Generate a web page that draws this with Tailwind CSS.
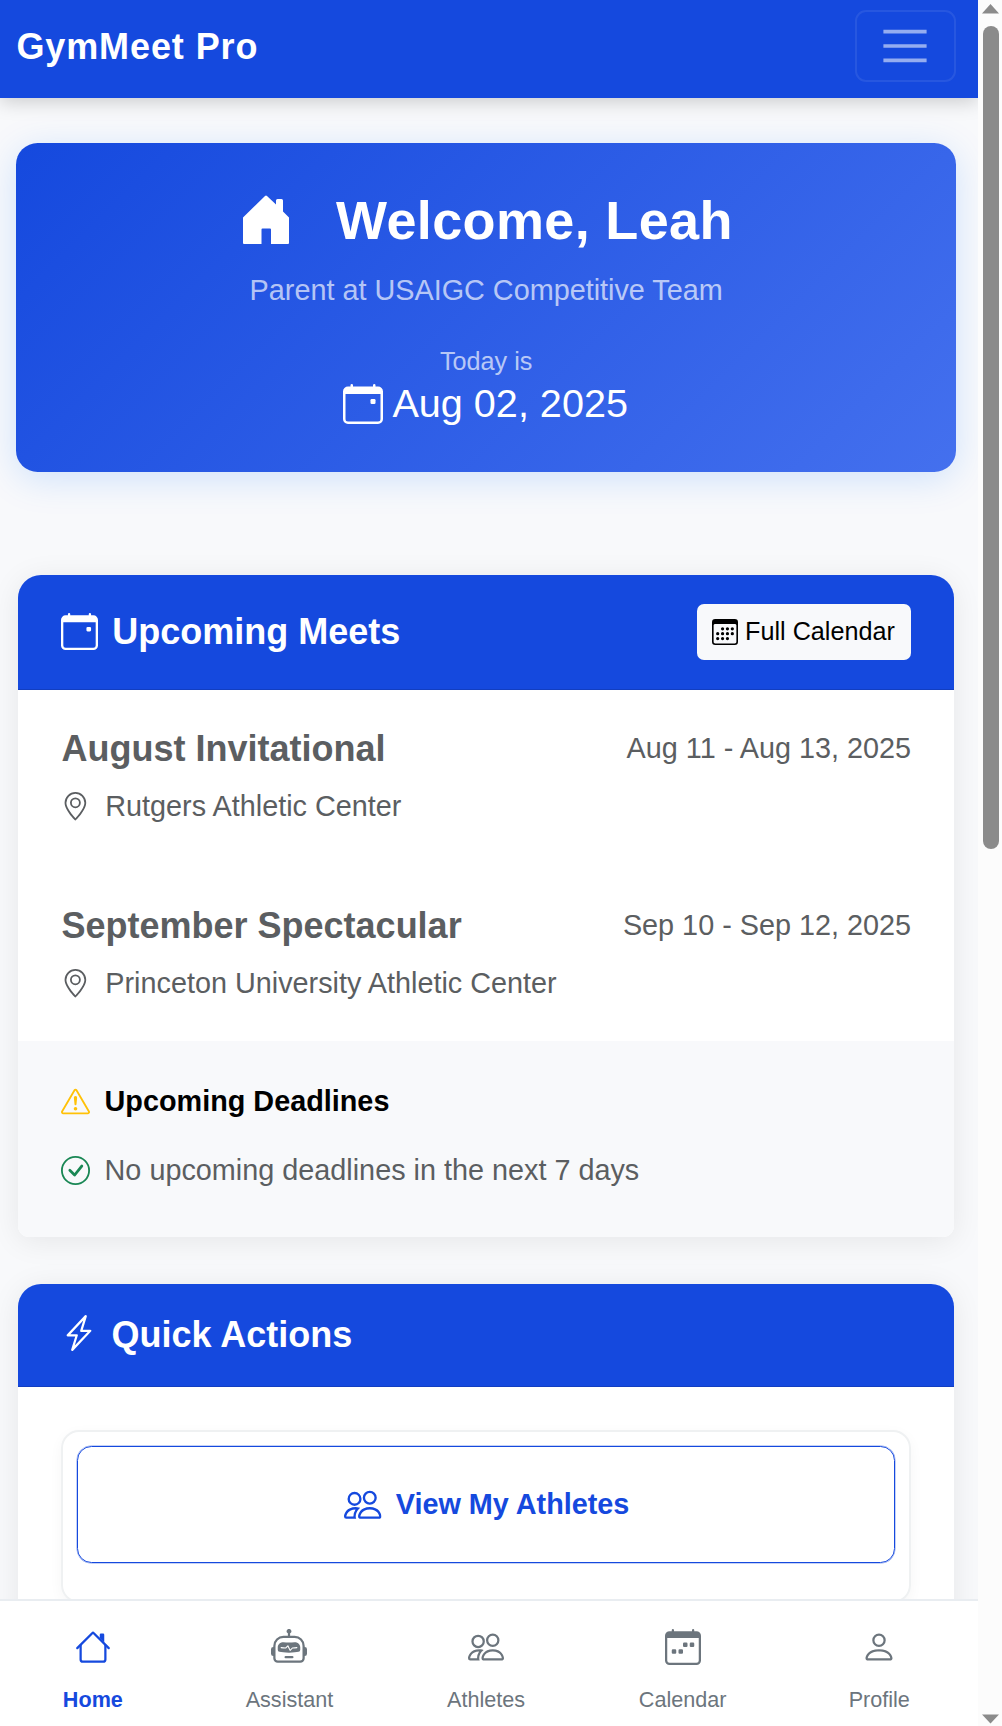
<!DOCTYPE html>
<html lang="en">
<head>
<meta charset="utf-8">
<title>GymMeet Pro</title>
<script src="https://cdn.jsdelivr.net/npm/@tailwindcss/browser@4"></script>
</head>
<body class="relative flex h-[1726px] w-[1002px] overflow-hidden bg-[#f8f9fb] font-['Liberation_Sans',Arial,sans-serif] text-[28.8px] leading-[43.2px] text-[#5b5e61]">
<svg class="hidden">
  <symbol id="calendar-event" viewBox="0 0 16 16"><path d="M11 6.5a.5.5 0 0 1 .5-.5h1a.5.5 0 0 1 .5.5v1a.5.5 0 0 1-.5.5h-1a.5.5 0 0 1-.5-.5z"/><path d="M3.500 0a.5.5 0 0 1 .5.5V1h8V.5a.5.5 0 0 1 1 0V1h1a2 2 0 0 1 2 2v11a2 2 0 0 1-2 2H2a2 2 0 0 1-2-2V3a2 2 0 0 1 2-2h1V.5a.5.5 0 0 1 .5-.5M1 4v10a1 1 0 0 0 1 1h12a1 1 0 0 0 1-1V4z"/></symbol>
  <symbol id="geo" viewBox="0 0 16 16"><path d="M12.166 8.94c-.524 1.062-1.234 2.12-1.96 3.07A32 32 0 0 1 8 14.58a32 32 0 0 1-2.206-2.57c-.726-.95-1.436-2.008-1.96-3.07C3.304 7.867 3 6.862 3 6a5 5 0 0 1 10 0c0 .862-.305 1.867-.834 2.94M8 16s6-5.686 6-10A6 6 0 0 0 2 6c0 4.314 6 10 6 10"/><path d="M8 8a2 2 0 1 1 0-4 2 2 0 0 1 0 4m0 1a3 3 0 1 0 0-6 3 3 0 0 0 0 6"/></symbol>
  <symbol id="people" viewBox="0 0 16 16"><path d="M15 14s1 0 1-1-1-4-5-4-5 3-5 4 1 1 1 1zm-7.978-1L7 12.996c.001-.264.167-1.03.76-1.72C8.312 10.629 9.282 10 11 10c1.717 0 2.687.63 3.24 1.276.593.69.758 1.457.76 1.72l-.008.002-.014.002zM11 7a2 2 0 1 0 0-4 2 2 0 0 0 0 4m3-2a3 3 0 1 1-6 0 3 3 0 0 1 6 0M6.936 9.28a6 6 0 0 0-1.23-.247A7 7 0 0 0 5 9c-4 0-5 3-5 4q0 1 1 1h4.216A2.240 2.240 0 0 1 5 13c0-1.010.377-2.042 1.090-2.904.243-.294.526-.569.846-.816M4.920 10A5.500 5.500 0 0 0 4 13H1c0-.26.164-1.030.76-1.724.545-.636 1.492-1.256 3.160-1.275ZM1.500 5.500a3 3 0 1 1 6 0 3 3 0 0 1-6 0m3-2a2 2 0 1 0 0 4 2 2 0 0 0 0-4"/></symbol>
</svg>

<div class="flex w-[977.6px] shrink-0 flex-col">
  <header class="z-10 flex h-[98.4px] shrink-0 items-start justify-between bg-[#1549de] pt-[10px] pr-[22px] pl-[16.4px] shadow-[0_4px_18px_rgba(0,0,0,0.18)]">
    <span class="text-[36px] leading-[73px] font-bold tracking-[0.9px] text-white">GymMeet Pro</span>
    <button class="flex h-[72px] w-[100.500px] items-center justify-center rounded-[11px] border-2 border-white/8">
      <svg class="size-[54px]" viewBox="0 0 30 30" fill="none" stroke="white" stroke-opacity=".55" stroke-width="2" stroke-miterlimit="10"><path d="M3 7h24M3 15h24M3 23h24"/></svg>
    </button>
  </header>

  <main class="flex flex-col">
    <section class="mt-[45px] ml-[16.4px] flex h-[329px] w-[939.600px] flex-col items-center rounded-[21.600px] bg-[linear-gradient(135deg,#1549de_0%,#4470ee_100%)] pt-[43.500px] text-white shadow-[0_7px_36px_rgba(13,110,253,0.17)]">
      <h1 class="flex h-[66px] items-center gap-[47.500px] pl-[3px] text-[54px] leading-[66px] font-bold tracking-[0.35px]">
        <svg class="h-[49px] w-[46px]" viewBox="0 0 46 49" fill="currentColor"><path d="M0 22.500 22 1Q23 0 24 1L33 9.500V5.500Q33 4 34.500 4H38.500Q40 4 40 5.500V16.500L46 22.500V48Q46 49 45 49H28V34.500Q28 33.500 27 33.500H19.500Q18.500 33.500 18.500 34.500V49H1Q0 49 0 48Z"/></svg>
        Welcome, Leah
      </h1>
      <p class="mt-[16px] text-white/68">Parent at USAIGC Competitive Team</p>
      <small class="mt-[30.500px] text-[25.200px] leading-[37.800px] text-white/68">Today is</small>
      <div class="flex items-center gap-[9px] pr-px text-[39.600px] leading-[46.600px]">
        <svg class="size-[40px]" fill="currentColor"><use href="#calendar-event"/></svg>Aug 02, 2025
      </div>
    </section>

    <section class="mt-[102.600px] ml-[18.200px] w-[936.200px] rounded-t-[23px] rounded-b-[11px] bg-white shadow-[0_4px_30px_rgba(0,0,0,0.08)]">
      <div class="flex h-[115.500px] items-center justify-between rounded-t-[23px] border-b border-[#123ec0] bg-[#1549de] px-[43px] pb-px">
        <h2 class="flex items-center gap-[14px] pb-px text-[36px] font-bold text-white"><svg class="size-[37px]" fill="currentColor"><use href="#calendar-event"/></svg>Upcoming Meets</h2>
        <a class="flex h-[56px] items-center gap-[7px] rounded-[7px] bg-[#f8f9fb] pr-[16.500px] pl-[15px] text-[25.200px] text-black">
          <svg class="size-[26px]" viewBox="0 0 16 16" fill="currentColor"><path d="M14 0H2a2 2 0 0 0-2 2v12a2 2 0 0 0 2 2h12a2 2 0 0 0 2-2V2a2 2 0 0 0-2-2M1 3.857C1 3.384 1.448 3 2 3h12c.552 0 1 .384 1 .857v10.286c0 .473-.448.857-1 .857H2c-.552 0-1-.384-1-.857z"/><path d="M6.500 7a1 1 0 1 0 0-2 1 1 0 0 0 0 2m3 0a1 1 0 1 0 0-2 1 1 0 0 0 0 2m3 0a1 1 0 1 0 0-2 1 1 0 0 0 0 2m-9 3a1 1 0 1 0 0-2 1 1 0 0 0 0 2m3 0a1 1 0 1 0 0-2 1 1 0 0 0 0 2m3 0a1 1 0 1 0 0-2 1 1 0 0 0 0 2m3 0a1 1 0 1 0 0-2 1 1 0 0 0 0 2m-9 3a1 1 0 1 0 0-2 1 1 0 0 0 0 2m3 0a1 1 0 1 0 0-2 1 1 0 0 0 0 2m3 0a1 1 0 1 0 0-2 1 1 0 0 0 0 2"/></svg>
          Full Calendar</a>
      </div>
      <div class="flex h-[350.500px] flex-col gap-[75.400px] px-[43.300px] pt-[37px]">
        <div>
          <div class="flex items-center justify-between"><h3 class="text-[36px] font-bold">August Invitational</h3><span>Aug 11 - Aug 13, 2025</span></div>
          <div class="mt-[14.600px] flex items-center gap-[15.500px]"><svg class="-ml-[0.5px] size-[28.800px]" fill="currentColor"><use href="#geo"/></svg>Rutgers Athletic Center</div>
        </div>
        <div>
          <div class="flex items-center justify-between"><h3 class="text-[36px] font-bold">September Spectacular</h3><span>Sep 10 - Sep 12, 2025</span></div>
          <div class="mt-[14.600px] flex items-center gap-[15.500px]"><svg class="-ml-[0.5px] size-[28.800px]" fill="currentColor"><use href="#geo"/></svg>Princeton University Athletic Center</div>
        </div>
      </div>
      <div class="h-[196.500px] rounded-b-[11px] bg-[#f8f9fb] px-[43px] pt-[39px]">
        <div class="flex items-center gap-[14.400px] font-bold text-black">
          <svg class="size-[29px] text-[#ffc107]" viewBox="0 0 16 16" fill="currentColor"><path d="M7.938 2.016A.13.13 0 0 1 8.002 2a.13.13 0 0 1 .063.016.15.15 0 0 1 .054.057l6.857 11.667c.036.06.035.124.002.183a.2.2 0 0 1-.054.06.1.1 0 0 1-.066.017H1.146a.1.1 0 0 1-.066-.017.2.2 0 0 1-.054-.06.18.18 0 0 1 .002-.183L7.884 2.073a.15.15 0 0 1 .054-.057m1.044-.45a1.130 1.130 0 0 0-1.960 0L.165 13.233c-.457.778.091 1.767.98 1.767h13.713c.889 0 1.438-.99.98-1.767z"/><path d="M7.002 12a1 1 0 1 1 2 0 1 1 0 0 1-2 0M7.100 5.995a.905.905 0 1 1 1.800 0l-.35 3.507a.552.552 0 0 1-1.100 0z"/></svg>
          Upcoming Deadlines</div>
        <div class="mt-[25.800px] flex items-center gap-[14.400px]">
          <svg class="size-[29px] text-[#198754]" viewBox="0 0 16 16" fill="currentColor"><path d="M8 15A7 7 0 1 1 8 1a7 7 0 0 1 0 14m0 1A8 8 0 1 0 8 0a8 8 0 0 0 0 16"/><path d="m10.970 4.970-.02.022-3.473 4.425-2.093-2.094a.75.75 0 0 0-1.060 1.060L6.970 11.030a.75.75 0 0 0 1.079-.02l3.992-4.990a.75.75 0 0 0-1.071-1.050"/></svg>
          No upcoming deadlines in the next 7 days</div>
      </div>
    </section>

    <section class="mt-[46.500px] ml-[18.200px] h-[500px] w-[936.200px] shrink-0 rounded-[23px] bg-white shadow-[0_4px_30px_rgba(0,0,0,0.08)]">
      <div class="flex h-[102.600px] items-center rounded-t-[23px] border-b border-[#123ec0] bg-[#1549de] px-[43px]">
        <h2 class="flex items-center gap-[14.400px] text-[36px] font-bold text-white">
          <svg class="mb-[3px] size-[36px]" viewBox="0 0 16 16" fill="currentColor"><path d="M11.251.068a.5.5 0 0 1 .227.58L9.677 6.500H13a.5.5 0 0 1 .364.843l-8 8.500a.5.5 0 0 1-.842-.49L6.323 9.500H3a.5.5 0 0 1-.364-.843l8-8.500a.5.5 0 0 1 .615-.09zM4.157 8.500H7a.5.5 0 0 1 .478.647L6.110 13.590l5.732-6.090H9a.5.5 0 0 1-.478-.647L9.890 2.410z"/></svg>
          Quick Actions</h2>
      </div>
      <div class="px-[43.300px] pt-[43.500px]">
        <div class="h-[173px] rounded-[18px] border-2 border-[#eff1f2] p-[14px] shadow-[0_4px_14px_rgba(0,0,0,0.04)]">
          <a class="flex h-[117px] items-center justify-center gap-[14px] rounded-[14.400px] border-[1.800px] border-[#1549de] pl-px font-bold text-[#1549de] ring-[0.5px] ring-[#1549de]/50"><svg class="size-[37.500px]" fill="currentColor"><use href="#people"/></svg>View My Athletes</a>
        </div>
      </div>
    </section>
  </main>
</div>

<!-- Fixed mobile tab bar -->
<nav class="fixed bottom-0 left-0 z-20 flex h-[127px] w-[977.600px] justify-center border-t-2 border-[#e9edf1] bg-white pt-[27.500px] pr-[5.500px] text-[21.600px] leading-[32.400px] text-[#6c757d]">
  <a class="flex w-[196.600px] shrink-0 flex-col items-center gap-[19px] font-bold text-[#1549de]"><svg class="size-[36px]" viewBox="0 0 16 16" fill="currentColor"><path d="M2 13.500V7h1v6.500a.5.5 0 0 0 .5.5h9a.5.5 0 0 0 .5-.5V7h1v6.500a1.500 1.500 0 0 1-1.500 1.500h-9A1.500 1.500 0 0 1 2 13.500m11-11V6l-2-2V2.500a.5.5 0 0 1 .5-.5h1a.5.5 0 0 1 .5.5"/><path d="M7.293 1.500a1 1 0 0 1 1.414 0l6.647 6.646a.5.5 0 0 1-.708.708L8 2.207 1.354 8.854a.5.5 0 1 1-.708-.708z"/></svg>Home</a>
  <a class="flex w-[196.600px] shrink-0 flex-col items-center gap-[19px]"><svg class="size-[36px]" viewBox="0 0 16 16" fill="currentColor"><path d="M6 12.500a.5.5 0 0 1 .5-.5h3a.5.5 0 0 1 0 1h-3a.5.5 0 0 1-.5-.5M3 8.062C3 6.760 4.235 5.765 5.530 5.886a26.600 26.600 0 0 0 4.940 0C11.765 5.765 13 6.760 13 8.062v1.157a.93.93 0 0 1-.765.935c-.845.147-2.340.346-4.235.346s-3.390-.2-4.235-.346A.93.93 0 0 1 3 9.219zm4.542-.827a.25.25 0 0 0-.217.068l-.92.9a25 25 0 0 1-1.871-.183.25.25 0 0 0-.068.495c.55.076 1.232.149 2.020.193a.25.25 0 0 0 .189-.071l.754-.736.847 1.710a.25.25 0 0 0 .404.062l.932-.97a25 25 0 0 0 1.922-.188.25.25 0 0 0-.068-.495c-.538.074-1.207.145-1.980.189a.25.25 0 0 0-.166.076l-.754.785-.842-1.700a.25.25 0 0 0-.182-.135"/><path d="M8.500 1.866a1 1 0 1 0-1 0V3h-2A4.500 4.500 0 0 0 1 7.500V8a1 1 0 0 0-1 1v2a1 1 0 0 0 1 1v1a2 2 0 0 0 2 2h10a2 2 0 0 0 2-2v-1a1 1 0 0 0 1-1V9a1 1 0 0 0-1-1v-.5A4.500 4.500 0 0 0 10.500 3h-2zM14 7.500V13a1 1 0 0 1-1 1H3a1 1 0 0 1-1-1V7.500A3.500 3.500 0 0 1 5.500 4h5A3.500 3.500 0 0 1 14 7.500"/></svg>Assistant</a>
  <a class="flex w-[196.600px] shrink-0 flex-col items-center gap-[19px]"><svg class="size-[36px]" fill="currentColor"><use href="#people"/></svg>Athletes</a>
  <a class="flex w-[196.600px] shrink-0 flex-col items-center gap-[19px]"><svg class="size-[36px]" viewBox="0 0 16 16" fill="currentColor"><path d="M11 6.500a.5.5 0 0 1 .5-.5h1a.5.5 0 0 1 .5.5v1a.5.5 0 0 1-.5.5h-1a.5.5 0 0 1-.5-.5zm-3 0a.5.5 0 0 1 .5-.5h1a.5.5 0 0 1 .5.5v1a.5.5 0 0 1-.5.5h-1a.5.5 0 0 1-.5-.5zm-5 3a.5.5 0 0 1 .5-.5h1a.5.5 0 0 1 .5.5v1a.5.5 0 0 1-.5.5h-1a.5.5 0 0 1-.5-.5zm3 0a.5.5 0 0 1 .5-.5h1a.5.5 0 0 1 .5.5v1a.5.5 0 0 1-.5.5h-1a.5.5 0 0 1-.5-.5z"/><path d="M3.500 0a.5.5 0 0 1 .5.5V1h8V.5a.5.5 0 0 1 1 0V1h1a2 2 0 0 1 2 2v11a2 2 0 0 1-2 2H2a2 2 0 0 1-2-2V3a2 2 0 0 1 2-2h1V.5a.5.5 0 0 1 .5-.5M1 4v10a1 1 0 0 0 1 1h12a1 1 0 0 0 1-1V4z"/></svg>Calendar</a>
  <a class="flex w-[196.600px] shrink-0 flex-col items-center gap-[19px]"><svg class="size-[36px]" viewBox="0 0 16 16" fill="currentColor"><path d="M8 8a3 3 0 1 0 0-6 3 3 0 0 0 0 6m2-3a2 2 0 1 1-4 0 2 2 0 0 1 4 0m4 8c0 1-1 1-1 1H3s-1 0-1-1 1-4 6-4 6 3 6 4m-1-.004c-.001-.246-.154-.986-.832-1.664C11.516 10.680 10.289 10 8 10s-3.516.68-4.168 1.332c-.678.678-.83 1.418-.832 1.664z"/></svg>Profile</a>
</nav>

<!-- Scrollbar -->
<aside class="z-30 flex flex-1 flex-col items-center bg-[#fcfcfc] pl-[2px]">
  <svg class="mt-[4px] h-[10px] w-[17px] shrink-0" viewBox="0 0 17 10" fill="#8b8b8b"><path d="M8.500 0 17 9.500H0z"/></svg>
  <div class="mt-[12px] h-[823px] w-[16.500px] shrink-0 rounded-full bg-[#8b8b8b]"></div>
  <svg class="mt-auto mb-[2px] h-[10px] w-[17px] shrink-0" viewBox="0 0 17 10" fill="#8b8b8b"><path d="M8.500 9.500 17 .5H0z"/></svg>
</aside>
</body>
</html>
